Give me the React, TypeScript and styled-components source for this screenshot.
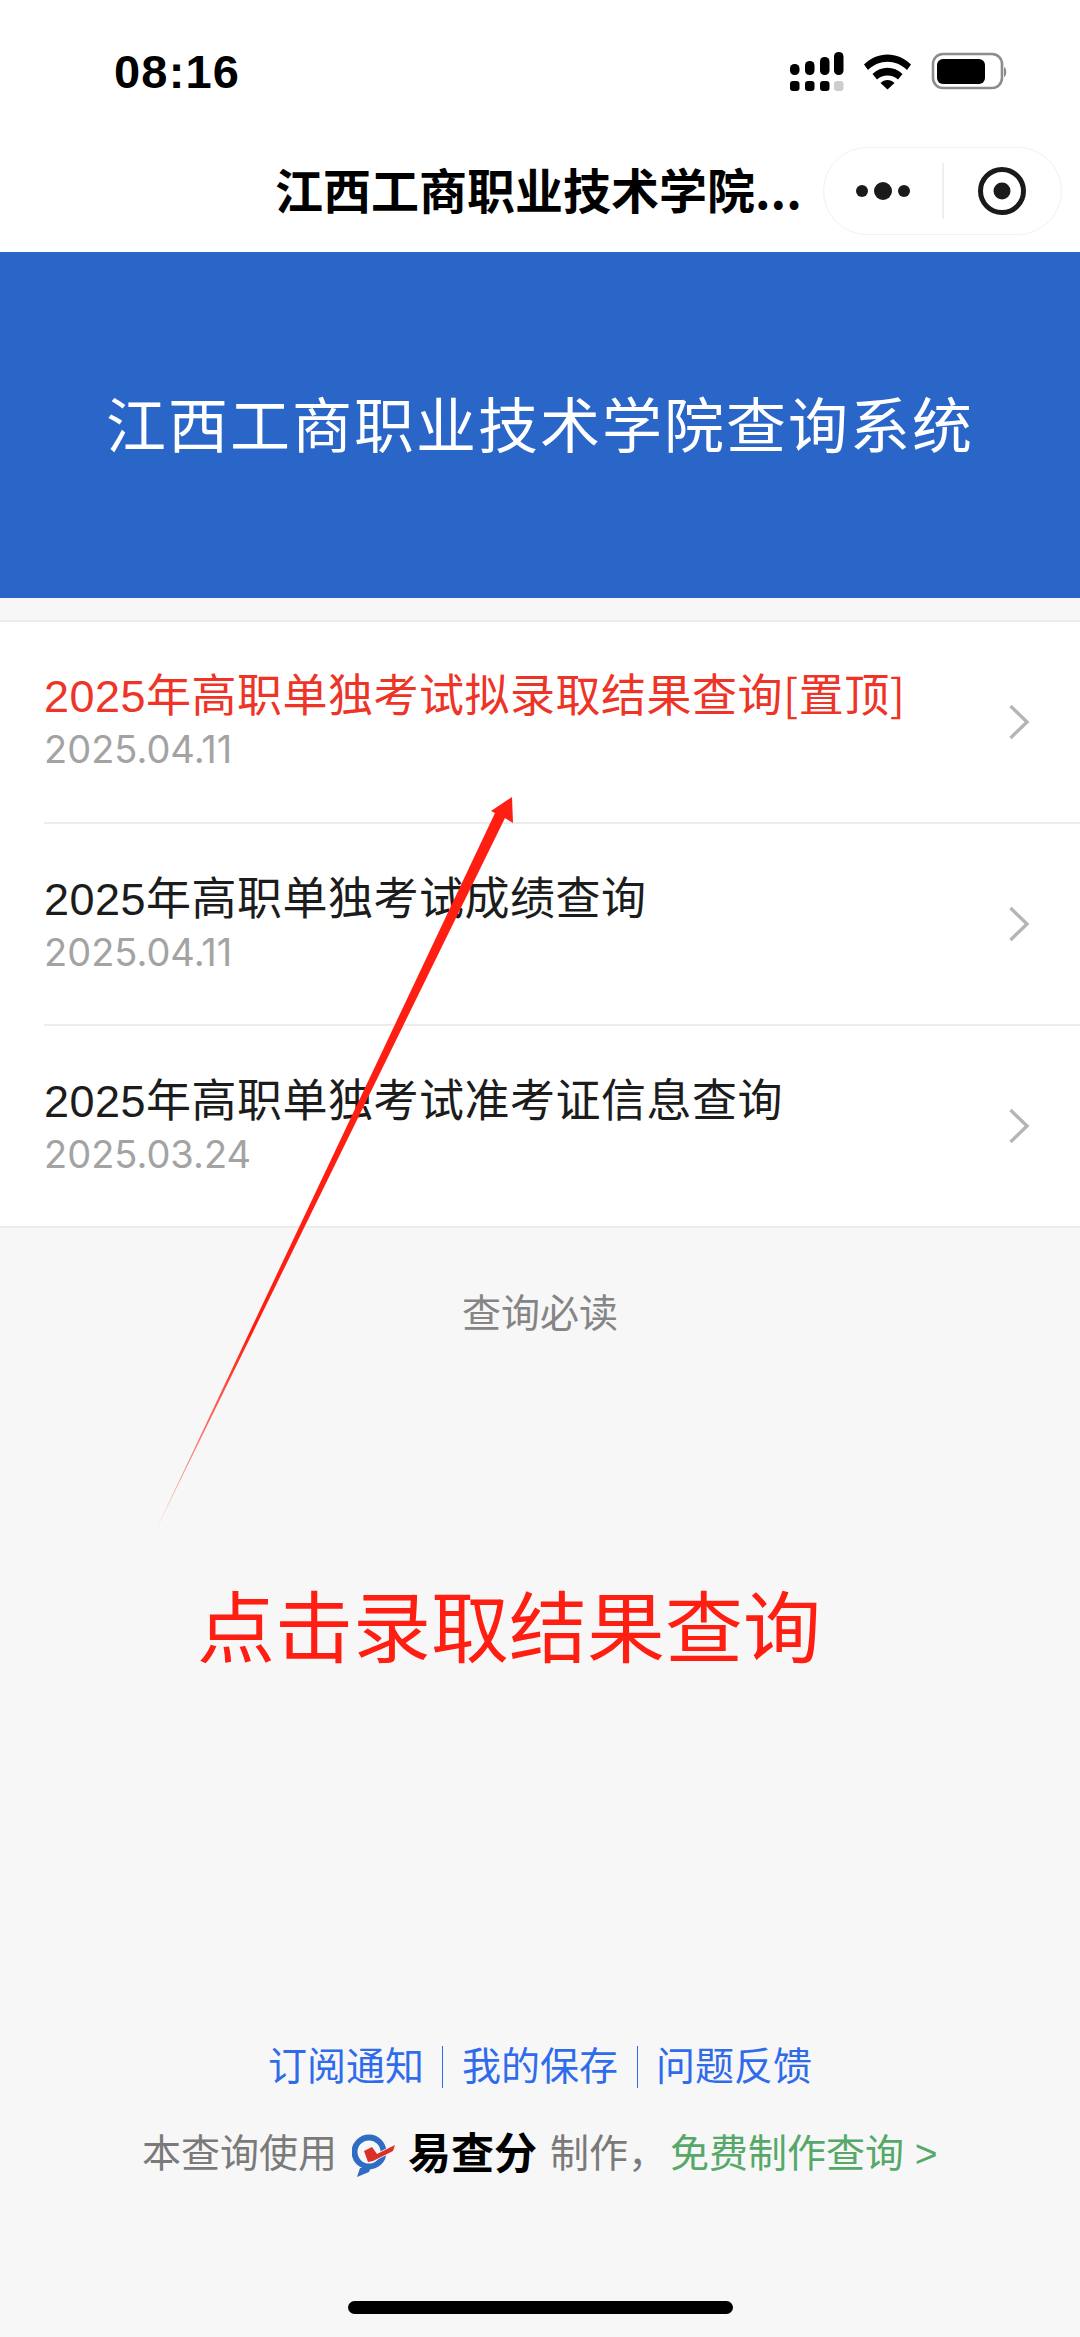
import React from "react";
import styled, { createGlobalStyle } from "styled-components";

const cjk = `"Liberation Sans", "Noto Sans CJK SC", sans-serif`;

const Global = createGlobalStyle`
  html, body { margin: 0; padding: 0; background: #f7f7f7; }
  * { box-sizing: border-box; }
  body { font-family: ${cjk}; }
`;

const Page = styled.div`
  position: relative;
  width: 1080px;
  height: 2337px;
  overflow: hidden;
  display: flex;
  flex-direction: column;
  background: #f7f7f7;
`;

const StatusBar = styled.div`
  height: 144px;
  background: #fff;
  display: flex;
  justify-content: space-between;
  align-items: flex-start;
  padding: 44px 73px 0 114px;
`;

const Clock = styled.div`
  font-family: "Liberation Sans", sans-serif;
  font-weight: 700;
  font-size: 47px;
  line-height: 56px;
  letter-spacing: 1.2px;
  color: #000;
`;

const StatusIcons = styled.svg`
  display: block;
  margin-top: 8px;
`;

const NavBar = styled.div`
  height: 108px;
  background: #fff;
  display: flex;
  align-items: flex-start;
  padding: 3px 18px 0 275px;
  justify-content: space-between;
`;

const NavTitle = styled.div`
  font-family: "Noto Sans CJK SC", sans-serif;
  font-weight: 700;
  font-size: 48px;
  line-height: 83px;
  color: #000;
  white-space: nowrap;
`;

const Capsule = styled.div`
  flex: none;
  width: 239px;
  height: 88px;
  border: 1px solid #f1f1f1;
  border-radius: 44px;
  display: flex;
  align-items: center;
  background: #fff;
`;

const CapsuleCell = styled.div`
  flex: 1;
  height: 56px;
  display: flex;
  align-items: center;
  justify-content: center;
  & + & { border-left: 2px solid #efefef; }
`;

const Banner = styled.div`
  height: 346px;
  padding-bottom: 7px;
  background: #2a65c8;
  display: flex;
  align-items: center;
  justify-content: center;
  color: #fff;
  font-family: "Noto Sans CJK SC", sans-serif;
  font-weight: 400;
  font-size: 60px;
  letter-spacing: 2px;
`;

const List = styled.div`
  margin-top: 22px;
  background: #fff;
  border-top: 2px solid #ececec;
  border-bottom: 2px solid #ececec;
`;

const RowText = styled.div`
  display: flex;
  flex-direction: column;
`;

const Row = styled.div`
  height: 202px;
  margin-left: 44px;
  padding-right: 44px;
  display: flex;
  align-items: center;
  justify-content: space-between;
  &:first-child { height: 200px; }
  &:first-child ${RowText} { padding-bottom: 6px; }
  & + & { border-top: 2px solid #ececec; }
`;

const RowTitle = styled.div<{ $pinned?: boolean }>`
  font-size: 45px;
  line-height: 54px;
  margin-bottom: 2px;
  letter-spacing: 0.5px;
  color: ${(p) => (p.$pinned ? "#ee3427" : "#1c1c1c")};
  white-space: nowrap;
`;

const PinMark = styled.span`
  font-family: "Noto Sans CJK SC", sans-serif;
`;

const RowDate = styled.div`
  font-family: Inter, "Liberation Sans", sans-serif;
  font-size: 38px;
  line-height: 46px;
  color: #a3a3a3;
`;

const Chevron = styled.svg`
  display: block;
  flex: none;
  margin-right: 6px;
`;

const Notice = styled.div`
  margin-top: 58px;
  text-align: center;
  font-size: 39px;
  line-height: 56px;
  color: #858585;
`;

const Footer = styled.div`
  margin-top: auto;
  display: flex;
  flex-direction: column;
  align-items: center;
`;

const LinkRow = styled.div`
  display: flex;
  align-items: center;
  height: 42px;
`;

const FooterLink = styled.div`
  font-size: 39px;
  line-height: 42px;
  padding: 0 18.5px;
  color: #2f6bea;
  white-space: nowrap;
  & + & { border-left: 1px solid #2f6bea; }
`;

const CreditRow = styled.div`
  display: flex;
  align-items: center;
  margin-top: 39px;
  height: 46px;
  font-size: 39px;
  color: #7a7a7a;
  white-space: nowrap;
  align-self: flex-start;
  margin-left: 142px;
`;

const Logo = styled.svg`
  display: block;
  margin: 12px 12px 0 15px;
`;

const Brand = styled.span`
  font-family: "Noto Sans CJK SC", sans-serif;
  font-weight: 700;
  font-size: 43px;
  color: #000;
  margin-right: 13px;
`;

const FreeLink = styled.span`
  margin-left: 3px;
  color: #55a868;
`;

const HomeArea = styled.div`
  height: 164px;
  display: flex;
  justify-content: center;
  padding-top: 128px;
`;

const HomeBar = styled.div`
  width: 385px;
  height: 13px;
  border-radius: 7px;
  background: #000;
`;

const ArrowLayer = styled.svg`
  position: absolute;
  left: 0;
  top: 0;
  pointer-events: none;
`;

const Annotation = styled.div`
  position: absolute;
  left: 197px;
  top: 1571px;
  font-family: "Noto Sans CJK SC", sans-serif;
  font-weight: 400;
  font-size: 78px;
  line-height: 104px;
  color: #fe1f12;
  white-space: nowrap;
`;

const rows = [
  { title: "2025年高职单独考试拟录取结果查询", mark: "[置顶]", date: "2025.04.11", pinned: true },
  { title: "2025年高职单独考试成绩查询", date: "2025.04.11" },
  { title: "2025年高职单独考试准考证信息查询", date: "2025.03.24" },
];

function StatusGlyphs() {
  const cols = [
    { x: 10, top: 12 },
    { x: 25, top: 9 },
    { x: 40, top: 5 },
    { x: 54, top: 0 },
  ];
  return (
    <StatusIcons width="227" height="40" viewBox="0 0 227 40" aria-hidden>
      {cols.map((c, i) => (
        <g key={c.x}>
          <rect x={c.x} y={c.top} width="9.5" height={23 - c.top} rx="4.5" fill="#000" />
          <rect x={c.x} y="29" width="9.5" height="10" rx="3" fill={i === 3 ? "#cdcdcd" : "#000"} />
        </g>
      ))}
      <path d="M84 12.5 C97 -1 118 -1 131 12.5 L127 18 C116 7 99 7 88 18 Z" fill="#000" />
      <path d="M92.5 22 C101 13.5 114 13.5 122.5 22 L118 27.5 C112.5 22 102.5 22 97 27.5 Z" fill="#000" />
      <path d="M100.5 31 C104.5 27 110.5 27 114.5 31 L107.5 37.5 Z" fill="#000" />
      <rect x="153" y="2" width="69" height="34" rx="10" fill="none" stroke="#8c8c8c" strokeWidth="2.6" />
      <rect x="157" y="7" width="48" height="25" rx="6" fill="#000" />
      <path d="M224 15 C227 16 227 24 224 25 Z" fill="#8c8c8c" />
    </StatusIcons>
  );
}

export default function App() {
  return (
    <Page>
      <Global />
      <StatusBar>
        <Clock>08:16</Clock>
        <StatusGlyphs />
      </StatusBar>
      <NavBar>
        <NavTitle>江西工商职业技术学院...</NavTitle>
        <Capsule>
          <CapsuleCell>
            <svg width="66" height="24" viewBox="0 0 66 24" aria-hidden>
              <circle cx="12" cy="12" r="6" fill="#1a1a1a" />
              <circle cx="33" cy="12" r="9" fill="#1a1a1a" />
              <circle cx="54" cy="12" r="6" fill="#1a1a1a" />
            </svg>
          </CapsuleCell>
          <CapsuleCell>
            <svg width="50" height="50" viewBox="0 0 50 50" aria-hidden>
              <circle cx="25" cy="25" r="21.5" fill="none" stroke="#1a1a1a" strokeWidth="5" />
              <circle cx="25" cy="25" r="8.5" fill="#1a1a1a" />
            </svg>
          </CapsuleCell>
        </Capsule>
      </NavBar>
      <Banner>江西工商职业技术学院查询系统</Banner>
      <List>
        {rows.map((r) => (
          <Row key={r.title}>
            <RowText>
              <RowTitle $pinned={r.pinned}>
                {r.title}
                {r.mark && <PinMark>{r.mark}</PinMark>}
              </RowTitle>
              <RowDate>{r.date}</RowDate>
            </RowText>
            <Chevron width="22" height="36" viewBox="0 0 22 36" aria-hidden>
              <path d="M2.5 2 L19 18 L2.5 34" fill="none" stroke="#b5b5b5" strokeWidth="3.4" />
            </Chevron>
          </Row>
        ))}
      </List>
      <Notice>查询必读</Notice>
      <Footer>
        <LinkRow>
          <FooterLink>订阅通知</FooterLink>
          <FooterLink>我的保存</FooterLink>
          <FooterLink>问题反馈</FooterLink>
        </LinkRow>
        <CreditRow>
          本查询使用
          <Logo width="44" height="44" viewBox="0 0 44 44" aria-hidden>
            <circle cx="17" cy="18" r="14.5" fill="none" stroke="#2f6cc4" strokeWidth="6" />
            <path d="M5 43 L8 34 L19 33 L17 38 Z" fill="#2f6cc4" />
            <path
              d="M12 17 L20 13 L25 20 L43 11 L41 17 L21 27 L16 28 Z"
              fill="#d9302a"
              stroke="#f7f7f7"
              strokeWidth="1.5"
              paintOrder="stroke"
            />
          </Logo>
          <Brand>易查分</Brand>
          制作，
          <FreeLink>免费制作查询 &gt;</FreeLink>
        </CreditRow>
        <HomeArea>
          <HomeBar />
        </HomeArea>
      </Footer>
      <ArrowLayer width="1080" height="2337" viewBox="0 0 1080 2337" aria-hidden>
        <defs>
          <linearGradient id="arrowFade" gradientUnits="userSpaceOnUse" x1="153" y1="1536" x2="250" y2="1335">
            <stop offset="0" stopColor="#fe1f12" stopOpacity="0.2" />
            <stop offset="1" stopColor="#fe1f12" />
          </linearGradient>
        </defs>
        <path d="M153 1536 L495 813 L491 811 L512 797 L513 823 L505 818 Z" fill="url(#arrowFade)" />
      </ArrowLayer>
      <Annotation>点击录取结果查询</Annotation>
    </Page>
  );
}
